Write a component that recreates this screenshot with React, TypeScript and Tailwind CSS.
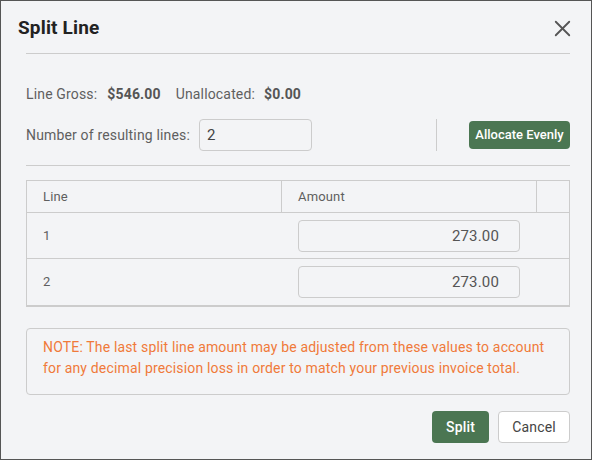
import { X } from "lucide-react";

const rows = [
  { line: 1, amount: "273.00" },
  { line: 2, amount: "273.00" },
];

export default function App() {
  return (
    <div
      className="w-[592px] h-[460px] bg-[#f3f4f6] border border-[#555] flex flex-col text-[#5f5f5f] tracking-[0.01em]"
      style={{ fontFamily: "Roboto, 'Liberation Sans', sans-serif" }}
    >
      {/* Header */}
      <div className="flex items-center justify-between pl-[17px] pr-[15px] pt-[13px] pb-[11px]">
        <h1 className="text-[19px] leading-[28px] font-bold text-[#222]">Split Line</h1>
        <X size={27} strokeWidth={1.6} className="text-[#555]" />
      </div>

      <div className="pl-[25px] pr-[21px] flex flex-col">
        <div className="border-t border-[#ccc]" />

        <div className="flex items-center text-[14px] leading-[20px] mt-[30px]">
          <span>Line Gross:</span>
          <span className="font-bold ml-[10px] text-[#555]">$546.00</span>
          <span className="ml-[15px]">Unallocated:</span>
          <span className="font-bold ml-[9px] text-[#555]">$0.00</span>
        </div>

        <div className="flex items-center mt-[15px] text-[14px]">
          <span>Number of resulting lines:</span>
          <input
            defaultValue="2"
            className="ml-[9px] w-[113px] h-[32px] border border-[#ccc] rounded-[4px] bg-[#f3f4f6] px-[7px] text-[15px] text-[#444] outline-none"
          />
          <div className="flex-1" />
          <div className="w-px h-[32px] bg-[#ccc] mr-[32px]" />
          <button className="h-[28px] w-[101px] rounded-[4px] bg-[#4b7652] text-white text-[13px] font-medium tracking-normal">
            Allocate Evenly
          </button>
        </div>

        <div className="border-t border-[#ccc] mt-[14px]" />

        {/* Table */}
        <div className="mt-[14px] border border-[#ccc] border-b-2 text-[13px]">
          <div className="grid grid-cols-[255px_255px_1fr] h-[32px] border-b border-[#ccc]">
            <div className="flex items-center pl-[16px] border-r border-[#ccc]">Line</div>
            <div className="flex items-center pl-[16px] border-r border-[#ccc]">Amount</div>
            <div />
          </div>
          {rows.map((r, i) => (
            <div
              key={r.line}
              className={
                "grid grid-cols-[255px_255px_1fr] h-[46px] items-center " +
                (i < rows.length - 1 ? "border-b border-[#ccc]" : "")
              }
            >
              <div className="pl-[16px]">{r.line}</div>
              <div className="pl-[16px]">
                <input
                  defaultValue={r.amount}
                  className="w-[222px] h-[32px] border border-[#ccc] rounded-[4px] bg-[#f3f4f6] pr-[20px] pl-[8px] text-right text-[15px] text-[#555] outline-none"
                />
              </div>
              <div />
            </div>
          ))}
        </div>

        {/* Note */}
        <div className="mt-[21px] border border-[#ccc] rounded-[4px] pl-[16px] pr-[20px] pt-[8px] pb-[15px] text-[14px] leading-[21px] text-[#f07a3a]">
          NOTE: The last split line amount may be adjusted from these values to account
          for any decimal precision loss in order to match your previous invoice total.
        </div>

        {/* Footer */}
        <div className="flex justify-end gap-[9px] mt-[16px]">
          <button className="h-[32px] w-[57px] rounded-[4px] bg-[#4b7652] text-white text-[14px] font-medium">
            Split
          </button>
          <button className="h-[32px] w-[72px] rounded-[4px] bg-white border border-[#ccc] text-[#444] text-[14px]">
            Cancel
          </button>
        </div>
      </div>
    </div>
  );
}
